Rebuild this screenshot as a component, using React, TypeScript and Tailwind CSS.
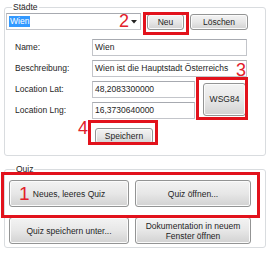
import React from "react";

function Btn({ className = "", children }: { className?: string; children: React.ReactNode }) {
  return (
    <button
      className={`flex items-center justify-center text-center rounded-[3px] border border-[#939494] bg-linear-to-b from-[#f3f3f3] via-[#e7e7e7] to-[#d2d2d2] shadow-[inset_0_0_0_1px_#fbfbfb] text-[8.5px] leading-[10px] text-[#1e1e1e] ${className}`}
    >
      {children}
    </button>
  );
}

function TextBox({ value, className = "" }: { value: string; className?: string }) {
  return (
    <div
      className={`h-[17px] flex items-center pl-[2px] border border-[#c3c5ca] border-t-[#a7aab0] bg-white text-[8.5px] text-[#1e1e1e] whitespace-nowrap overflow-hidden ${className}`}
    >
      {value}
    </div>
  );
}

function Label({ children }: { children: React.ReactNode }) {
  return <div className="h-[17px] flex items-center pl-[9px] text-[8.5px] text-[#1e1e1e]">{children}</div>;
}

function RedBox({ className }: { className: string }) {
  return <div className={`absolute border-[3px] border-[#e2121c] ${className}`} />;
}

function RedNum({ className, children }: { className: string; children: React.ReactNode }) {
  return <div className={`absolute text-[#e2202a] leading-none ${className}`}>{children}</div>;
}

export default function App() {
  return (
    <div className="relative w-[276px] h-[261px] bg-white overflow-hidden font-['Liberation_Sans',Arial,sans-serif] text-[#1e1e1e]">
      {/* Städte group */}
      <fieldset className="ml-[4px] mt-[1px] w-[262px] h-[155px] border border-[#d9dcdf] rounded-[3px] pl-[1px] pr-0 pb-0">
        <legend className="ml-[6px] px-[1px] text-[8.5px] leading-[12px]">Städte</legend>
        <div className="flex items-start">
          <div className="relative w-[135px] h-[17px] border border-[#c3c5ca] border-t-[#a7aab0] bg-white flex items-center pl-[2px]">
            <span className="bg-[#3399ff] text-white text-[8.5px] leading-[11px] px-[1px]">Wien</span>
            <svg className="absolute right-[3px] top-[6px]" width="6" height="4" viewBox="0 0 6 4">
              <path d="M0 0 H6 L3 3.5 Z" fill="#222" />
            </svg>
          </div>
          <Btn className="ml-[6px] mt-[1px] w-[37px] h-[16px]">Neu</Btn>
          <Btn className="ml-[6px] mt-[1px] w-[58px] h-[16px]">Löschen</Btn>
        </div>

        <div className="mt-[9px] grid grid-cols-[86px_103px_52px] gap-y-[4px]">
          <Label>Name:</Label>
          <TextBox value="Wien" className="col-span-2 w-[155px]" />
          <Label>Beschreibung:</Label>
          <TextBox value="Wien ist die Hauptstadt Österreichs" className="col-span-2 w-[155px]" />
          <Label>Location Lat:</Label>
          <TextBox value="48,2083300000" />
          <div className="row-span-2 flex items-center">
            <Btn className="ml-[8px] w-[43px] h-[33px] mt-[-2px]">WSG84</Btn>
          </div>
          <Label>Location Lng:</Label>
          <TextBox value="16,3730640000" />
          <div />
          <Btn className="mt-[5px] ml-[3px] w-[58px] h-[16px]">Speichern</Btn>
        </div>
      </fieldset>

      {/* Quiz group */}
      <fieldset className="ml-[4px] mt-[7px] w-[262px] h-[85px] border border-[#d9dcdf] rounded-[3px] pl-[4px] pr-0 pb-0">
        <legend className="ml-[6px] px-[1px] text-[8.5px] leading-[12px]">Quiz</legend>
        <div className="mt-[5px] grid grid-cols-[120px_116px] gap-x-[6px] gap-y-[10px]">
          <Btn className="h-[27px]">Neues, leeres Quiz</Btn>
          <Btn className="h-[27px]">Quiz öffnen...</Btn>
          <Btn className="h-[27px]">Quiz speichern unter...</Btn>
          <Btn className="h-[27px]">
            Dokumentation in neuem
            <br />
            Fenster öffnen
          </Btn>
        </div>
      </fieldset>

      {/* annotations */}
      <RedBox className="left-[143px] top-[12px] w-[46px] h-[23px]" />
      <RedNum className="left-[119px] top-[12px] text-[18px]">2</RedNum>
      <RedNum className="left-[236px] top-[61px] text-[18px]">3</RedNum>
      <RedBox className="left-[196px] top-[77px] w-[52px] h-[43px]" />
      <RedBox className="left-[88px] top-[120px] w-[70px] h-[25px]" />
      <RedNum className="left-[78px] top-[119px] text-[18px]">4</RedNum>
      <RedBox className="left-[1px] top-[172px] w-[259px] h-[46px]" />
      <RedNum className="left-[19px] top-[184px] text-[19px]">1</RedNum>
    </div>
  );
}
